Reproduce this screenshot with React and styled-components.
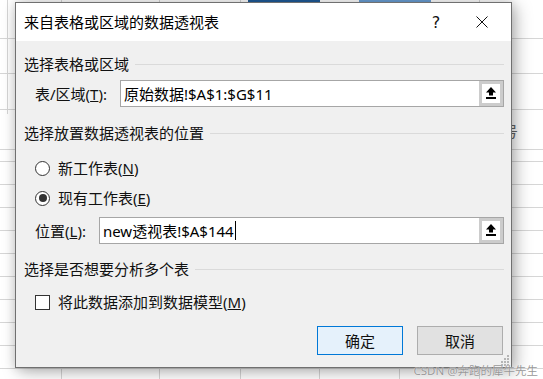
import React from "react";
import styled, { createGlobalStyle } from "styled-components";

const Global = createGlobalStyle`
  html, body { margin: 0; padding: 0; background: #fff; }
  #root { width: 543px; height: 379px; }
`;

const GRID = "#d6d6d6";
const rows = [38, 73, 109, 149, 161, 184, 207, 230, 253, 276, 299, 322, 345, 368];
const cols = [61, 159, 240, 319, 399, 479];

const hLayers = rows.map(
  (y) => `linear-gradient(${GRID}, ${GRID}) 0 ${y}px / 100% 1px no-repeat`
);
const vLayers = cols.map(
  (x) => `linear-gradient(${GRID}, ${GRID}) ${x}px 0 / 1px 100% no-repeat`
);
const extra = [
  `linear-gradient(#1f5c99, #1f5c99) 248px 0 / 72px 2px no-repeat`,
  `linear-gradient(#6a9fd6, #6a9fd6) 359px 0 / 72px 2px no-repeat`,
  `linear-gradient(${GRID}, ${GRID}) 7px 0 / 1px 114px no-repeat`,
];

const Desk = styled.div`
  position: relative;
  width: 543px;
  height: 379px;
  overflow: hidden;
  box-sizing: border-box;
  padding: 2px 0 0 15px;
  background: ${[...extra, ...hLayers, ...vLayers, "#ffffff"].join(", ")};
  font-family: "Noto Sans", "Noto Sans CJK SC", sans-serif;
  color: #000;
`;

const CellText = styled.div`
  position: absolute;
  left: 503px;
  top: 121px;
  font-family: "Noto Sans CJK SC", sans-serif;
  font-size: 15px;
  line-height: 20px;
  color: #666;
`;

const Dialog = styled.div`
  position: relative;
  box-sizing: border-box;
  width: 497px;
  height: 366px;
  border: 1px solid #707070;
  background: #f0f0f0;
  display: flex;
  flex-direction: column;
  box-shadow: 4px 4px 16px rgba(0, 0, 0, 0.28), 0 0 10px rgba(0, 0, 0, 0.14);
`;

const TitleBar = styled.div`
  height: 38px;
  background: #fff;
  display: flex;
  align-items: center;
  padding: 0 6px 0 8px;
`;

const Title = styled.div`
  flex: 1;
  font-size: 15px;
  line-height: 20px;
  font-family: "Noto Sans CJK SC", sans-serif;
`;

const TitleButton = styled.div`
  width: 46px;
  height: 38px;
  display: flex;
  align-items: center;
  justify-content: center;
  font-family: "DejaVu Sans", sans-serif;
  font-size: 16px;
  color: #111;
`;

const Content = styled.div`
  display: flex;
  flex-direction: column;
  padding: 0 7px 0 8px;
  font-size: 15px;
`;

const SectionHeader = styled.div`
  margin-top: ${(p) => p.$top}px;
  height: 20px;
  display: flex;
  align-items: center;
  gap: 6px;
  line-height: 20px;
  color: #111;
  &::after {
    content: "";
    flex: 1;
    height: 1px;
    background: #dadada;
  }
`;

const FieldRow = styled.div`
  margin-top: ${(p) => p.$top}px;
  height: 27px;
  padding-left: 11px;
  display: flex;
  align-items: center;
  gap: 13px;
`;

const Label = styled.span`
  white-space: nowrap;
  line-height: 20px;
  color: #111;
`;

const InputBox = styled.div`
  flex: 1;
  height: 100%;
  box-sizing: border-box;
  border: 1px solid #a6a6a6;
  background: #fff;
  display: flex;
  align-items: stretch;
`;

const InputText = styled.div`
  flex: 1;
  display: flex;
  align-items: center;
  padding-left: 3px;
  line-height: 20px;
  white-space: nowrap;
`;

const Caret = styled.span`
  display: inline-block;
  width: 1px;
  height: 19px;
  background: #000;
  margin-left: 1px;
`;

const RefButton = styled.div`
  width: 24px;
  box-sizing: border-box;
  padding: 3px;
  background: #cccccc;
  display: flex;
`;

const RefInner = styled.div`
  flex: 1;
  background: #fff;
  display: flex;
  align-items: center;
  justify-content: center;
`;

const OptionList = styled.div`
  margin-top: ${(p) => p.$top}px;
  display: flex;
  flex-direction: column;
  gap: 10px;
`;

const Option = styled.div`
  height: 20px;
  padding-left: 11px;
  display: flex;
  align-items: center;
  gap: 8px;
  line-height: 20px;
  color: #111;
`;

const Radio = styled.span`
  width: 15px;
  height: 15px;
  box-sizing: border-box;
  border: 1px solid #333;
  border-radius: 50%;
  background: #fff;
  display: flex;
  align-items: center;
  justify-content: center;
  &::after {
    content: "";
    width: 8px;
    height: 8px;
    border-radius: 50%;
    background: ${(p) => (p.$checked ? "#333" : "transparent")};
  }
`;

const Check = styled.span`
  width: 15px;
  height: 15px;
  box-sizing: border-box;
  border: 1px solid #333;
  background: #fff;
`;

const ButtonRow = styled.div`
  margin-top: 14px;
  display: flex;
  justify-content: flex-end;
  gap: 14px;
  padding-right: 1px;
`;

const Button = styled.div`
  width: 86px;
  height: 29px;
  box-sizing: border-box;
  border: 1px solid ${(p) => (p.$primary ? "#0078d7" : "#adadad")};
  background: ${(p) => (p.$primary ? "#e5f1fb" : "#e1e1e1")};
  display: flex;
  align-items: center;
  justify-content: center;
  font-size: 15px;
  color: #111;
`;

const Grip = styled.svg`
  position: absolute;
  right: 1px;
  bottom: 1px;
`;

const Watermark = styled.div`
  position: absolute;
  right: 5px;
  bottom: 1px;
  font-family: "Noto Sans", "Noto Sans CJK SC", sans-serif;
  font-size: 11.5px;
  line-height: 14px;
  color: rgba(140, 140, 140, 0.9);
  text-shadow: 0 0 1px #fff;
  white-space: nowrap;
`;

const UploadIcon = () => (
  <svg width="10" height="13" viewBox="0 0 10 13">
    <path d="M5 0 L10 5.5 H7 V8.5 H3 V5.5 H0 Z" fill="#000" />
    <rect x="0" y="10" width="10" height="2" fill="#000" />
  </svg>
);

const CloseIcon = () => (
  <svg width="12" height="12" viewBox="0 0 12 12">
    <path d="M0.5 0.5 L11.5 11.5 M11.5 0.5 L0.5 11.5" stroke="#111" strokeWidth="1" />
  </svg>
);

export default function App() {
  return (
    <>
      <Global />
      <Desk>
        <CellText>号</CellText>
        <Dialog>
          <TitleBar>
            <Title>来自表格或区域的数据透视表</Title>
            <TitleButton>?</TitleButton>
            <TitleButton>
              <CloseIcon />
            </TitleButton>
          </TitleBar>
          <Content>
            <SectionHeader $top={13}>选择表格或区域</SectionHeader>
            <FieldRow $top={6}>
              <Label>
                表/区域(<u>T</u>):
              </Label>
              <InputBox>
                <InputText>原始数据!$A$1:$G$11</InputText>
                <RefButton>
                  <RefInner>
                    <UploadIcon />
                  </RefInner>
                </RefButton>
              </InputBox>
            </FieldRow>

            <SectionHeader $top={16}>选择放置数据透视表的位置</SectionHeader>
            <OptionList $top={15}>
              <Option>
                <Radio />
                <span>
                  新工作表(<u>N</u>)
                </span>
              </Option>
              <Option>
                <Radio $checked />
                <span>
                  现有工作表(<u>E</u>)
                </span>
              </Option>
            </OptionList>
            <FieldRow $top={9}>
              <Label>
                位置(<u>L</u>):
              </Label>
              <InputBox>
                <InputText>
                  new透视表!$A$144
                  <Caret />
                </InputText>
                <RefButton>
                  <RefInner>
                    <UploadIcon />
                  </RefInner>
                </RefButton>
              </InputBox>
            </FieldRow>

            <SectionHeader $top={15}>选择是否想要分析多个表</SectionHeader>
            <OptionList $top={13}>
              <Option>
                <Check />
                <span>
                  将此数据添加到数据模型(<u>M</u>)
                </span>
              </Option>
            </OptionList>

            <ButtonRow>
              <Button $primary>确定</Button>
              <Button>取消</Button>
            </ButtonRow>
          </Content>
          <Grip width="9" height="11" viewBox="0 0 9 11">
            {[
              [6, 0],
              [6, 3],
              [3, 3],
              [6, 6],
              [3, 6],
              [0, 6],
              [6, 9],
              [3, 9],
              [0, 9],
            ].map(([x, y], i) => (
              <rect key={i} x={x} y={y} width="2" height="2" fill="#b5b5b5" />
            ))}
          </Grip>
        </Dialog>
        <Watermark>CSDN @奔跑的犀牛先生</Watermark>
      </Desk>
    </>
  );
}
